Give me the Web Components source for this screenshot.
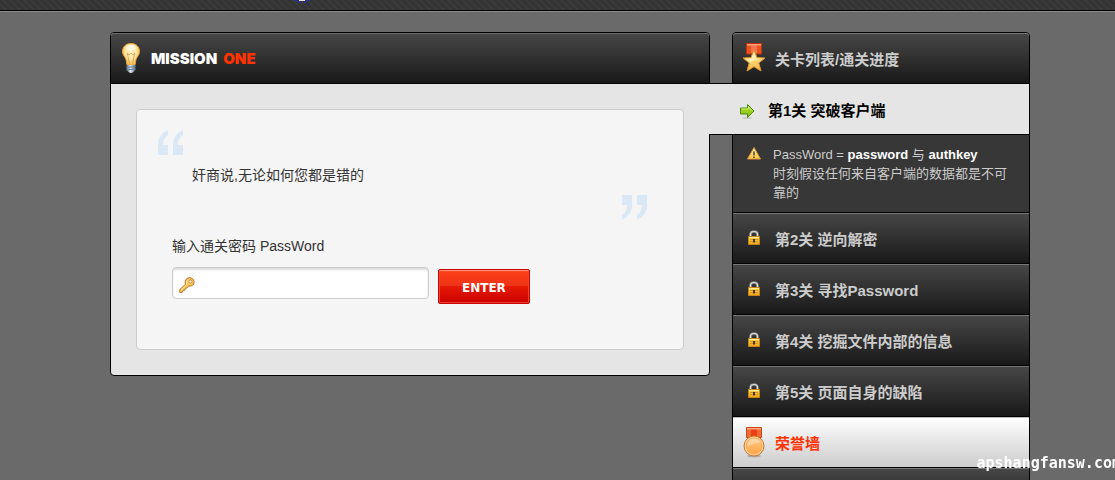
<!DOCTYPE html>
<html lang="zh-CN">
<head>
<meta charset="utf-8">
<title>Mission One</title>
<style>
  html, body { margin: 0; height: 100%; overflow: hidden; }
  body {
    background: #6a6a6a;
    color: #333;
    font: 14px/20px "Liberation Sans", "Noto Sans CJK SC", sans-serif;
  }
</style>
</head>
<body>
<mission-app></mission-app>
<script>
function define(name, html, setup) {
  const tpl = document.createElement('template');
  tpl.innerHTML = html;
  customElements.define(name, class extends HTMLElement {
    connectedCallback() {
      if (this.shadowRoot) return;
      this.attachShadow({ mode: 'open' }).append(tpl.content.cloneNode(true));
      if (setup) setup(this, this.shadowRoot);
    }
  });
}

const ICONS = {
  bulb: `<svg width="20" height="32" viewBox="0 0 20 32">
    <defs><radialGradient id="g" cx=".5" cy=".4" r=".6"><stop offset="0" stop-color="#fff6cc"/><stop offset=".55" stop-color="#fde29a"/><stop offset="1" stop-color="#f6b948"/></radialGradient>
    <linearGradient id="m"><stop offset="0" stop-color="#5f7387"/><stop offset=".45" stop-color="#dfe8f0"/><stop offset="1" stop-color="#54687c"/></linearGradient></defs>
    <path d="M10 1.500C4.800 1.500 1.500 5 1.500 9.500c0 3.500 2.500 5.200 3.500 8 .6 2 .4 4.500 1.200 5.500h7.600c.8-1 .6-3.500 1.200-5.500 1-2.800 3.500-4.500 3.500-8 0-4.500-3.300-8-8.500-8z" fill="url(#g)" stroke="#e8a33c"/>
    <path d="M8.500 21.500 6.300 11l1.700 2 2-2 2 2 1.700-2-2.200 10.500" fill="none" stroke="#c79a52" stroke-width=".8"/>
    <ellipse cx="10" cy="5.500" rx="5.500" ry="3" fill="#fff" opacity=".6"/>
    <path d="M5.500 23h9v4.500L12.500 30q-2.500 2-5 0l-2-2.500z" fill="url(#m)"/>
    <path d="M5.500 25.500 14.500 24.500M5.500 28l9-1.200" stroke="#647b93"/></svg>`,
  star: `<svg width="24" height="32" viewBox="0 0 24 32">
    <defs><linearGradient id="g" x2="0" y2="1"><stop offset="0" stop-color="#fff3a8"/><stop offset="1" stop-color="#fbb740"/></linearGradient></defs>
    <path d="M4.500 1.500h15V12h-15z" fill="#e8521f" stroke="#bf3410"/>
    <path d="M9 2h6v9H9z" fill="#f4744c"/><path d="M5 2h14v1.500H5z" fill="#ff9c75"/>
    <path d="m12 8 3 7.500 8 .5-6.200 5 2.200 8-7-4.300L5 29l2.200-8L1 16l8-.5z" fill="url(#g)" stroke="#dd9230" stroke-linejoin="round"/>
    <path d="m12 10.500 2 6 6.500.500q-9-.5-12.500 5l.500-1.500-5-3.500 6-.5z" fill="#fffbd8" opacity=".6"/></svg>`,
  medal: `<svg width="24" height="32" viewBox="0 0 24 32">
    <defs><linearGradient id="g" x2="0" y2="1"><stop offset="0" stop-color="#ffcb86"/><stop offset="1" stop-color="#ffa347"/></linearGradient></defs>
    <path d="M4.500 1.500h15v10h-15z" fill="#f06a35" stroke="#c74b18"/>
    <path d="M9 2h6v9H9z" fill="#ea3f14"/><path d="M5 2h14v1.500H5z" fill="#ffa37c"/>
    <ellipse cx="12" cy="30" rx="7" ry="1.500" fill="#555" opacity=".35"/>
    <circle cx="12" cy="20" r="10" fill="#ffd09a" stroke="#c97a2e"/>
    <circle cx="12" cy="20" r="8" fill="url(#g)" stroke="#f5ae60"/>
    <path d="M4.500 21Q6 12.500 12 12.500q5 0 7 4-8 .500-14.500 4.500z" fill="#fff" opacity=".28"/></svg>`,
  arrow: `<svg width="16" height="16" viewBox="0 0 16 16">
    <defs><linearGradient id="g" x2="0" y2="1"><stop offset="0" stop-color="#b6e03a"/><stop offset="1" stop-color="#7cc00c"/></linearGradient></defs>
    <ellipse cx="8" cy="15" rx="5" ry="1" fill="#888" opacity=".3"/>
    <path d="M1.500 5h7V1.500L15 8l-6.500 6.500V11h-7z" fill="url(#g)" stroke="#4d8a10" stroke-linejoin="round"/>
    <path d="M2.500 6h7V4L13 7.500" fill="none" stroke="#d8f07a" stroke-width=".8"/></svg>`,
  warning: `<svg width="16" height="16" viewBox="0 0 16 16">
    <defs><linearGradient id="g" x2="0" y2="1"><stop offset="0" stop-color="#fff2a0"/><stop offset="1" stop-color="#fdc63c"/></linearGradient></defs>
    <path d="M8 2.500 14.500 14h-13z" fill="url(#g)" stroke="#e09040" stroke-linejoin="round"/>
    <path d="M8 6.500v4M8 11.500v1.500" stroke="#444" stroke-width="1.500"/></svg>`,
  lock: `<svg width="16" height="16" viewBox="0 0 16 16">
    <defs><linearGradient id="g" x2="0" y2="1"><stop offset="0" stop-color="#ffd84f"/><stop offset="1" stop-color="#eda51c"/></linearGradient></defs>
    <path d="M4.500 8V4.500Q4.500 1.500 8 1.500t3.500 3V8" fill="none" stroke="#858585" stroke-width="2.600"/>
    <path d="M4.500 8V4.500Q4.500 1.500 8 1.500t3.500 3V8" fill="none" stroke="#ddd" stroke-width="1.200"/>
    <path d="M2.500 6.500h11v8h-11z" fill="url(#g)" stroke="#c98412"/>
    <path d="M3 7.500h10" stroke="#fff0a0"/><path d="M4 9.500h8M4 11.500h8" stroke="#d9941f"/>
    <path d="M7 9h2v3.500H7z" fill="#4c3512"/></svg>`,
  key: `<svg width="16" height="16" viewBox="0 0 16 16">
    <path d="M.8 12.500 6.300 7.500Q5.500 3.500 7.800 1.500q3-2 6 .3 2.500 2.700.7 5.700-2 2.300-5 1.500L8 11l-1.700.300-.5 2-1.800.2-.7 1.800-2.500.2z" fill="#fbc75c" stroke="#b8742c" stroke-linejoin="round"/>
    <path d="M2 13 7.500 8Q6.800 4 9 2.500" fill="none" stroke="#ffe391"/>
    <circle cx="11.500" cy="4.500" r="1.500" fill="#fff" stroke="#c78a40"/></svg>`,
  'quote-open': `<svg width="28" height="25" viewBox="0 0 28 25"><path d="M11 0Q1 5 1 14V25H11V15H6Q6 8 11 5ZM26 0Q16 5 16 14V25H26V15H21Q21 8 26 5Z" fill="#d9e8f4"/></svg>`,
  'quote-close': `<svg width="28" height="25" viewBox="0 0 28 25"><path d="M2 25Q12 20 12 11V0H2V10H7Q7 17 2 20ZM17 25Q27 20 27 11V0H17V10H22Q22 17 17 20Z" fill="#d9e8f4"/></svg>`
};

define('ui-icon', `<style>:host{display:block;flex:none} svg{display:block}</style><span></span>`,
  (el, root) => { root.querySelector('span').innerHTML = ICONS[el.getAttribute('name')]; });

define('top-bar', `
<style>
  :host { display: block; border-bottom: 1px solid #000; box-shadow: 0 1px #8a8a8a;
    background: repeating-linear-gradient(45deg, #343434 0 3px, #3a3a3a 3px 5px); }
  header { height: 10px; padding-left: 293px; }
  svg { display: block; }
</style>
<header><svg width="18" height="3" viewBox="0 0 18 3"><path d="M1 0h3v1h-3zM4 1h3v1H4zM11 1h3v1h-3zM14 0h3v1h-3zM5 2h3v1H5zM11 2h2v1h-2z" fill="#2c2c9c"/><path d="M6 0h6v1H6z" fill="#ddd"/></svg></header>`);

define('mission-panel', `
<style>
  :host { display: block; border: 1px solid #000; border-radius: 4px; background: #e5e5e5; }
  header { display: flex; align-items: center; gap: 10px; height: 50px; padding-left: 10px;
    border-bottom: 1px solid #000; border-radius: 3px 3px 0 0; box-shadow: inset 0 1px #6c6c6c;
    background: linear-gradient(#474747, #191919); }
  h1 { display: flex; gap: 6px; margin: 0; padding-top: 2px; font: 900 15px/20px Inter, sans-serif; color: #fff; }
  em { font-style: normal; color: #f30; }
  .body { padding: 25px; }
</style>
<header><ui-icon name="bulb"></ui-icon><h1>MISSION <em>ONE</em></h1></header>
<div class="body"><slot></slot></div>`);

define('quote-box', `
<style>
  :host { display: flex; flex-direction: column; gap: 10px; }
  .close { align-self: flex-end; margin-right: 15px; }
  blockquote { margin: 0 35px; }
</style>
<ui-icon name="quote-open"></ui-icon>
<blockquote><slot></slot></blockquote>
<ui-icon class="close" name="quote-close"></ui-icon>`);

define('password-form', `
<style>
  :host { display: block; margin: 16px 15px 25px; }
  label { display: block; margin-bottom: 11px; }
  .row { display: flex; align-items: flex-end; gap: 9px; }
  .field { display: grid; flex: 0 1 257px; align-self: flex-start; }
  .field > * { grid-area: 1 / 1; }
  ui-icon { align-self: center; margin: 4px 0 0 7px; z-index: 1; pointer-events: none; }
  input { box-sizing: border-box; width: 100%; height: 32px; padding: 0 8px 0 30px;
    border: 1px solid #ccc; border-radius: 4px; background: #fff; box-shadow: inset 0 2px 2px #ddd;
    font: inherit; color: #333; outline: 0; }
  button { margin: 2px 0 0; height: 35px; padding: 2px 23px 0; border: 1px solid #c00; border-radius: 2px;
    background: linear-gradient(#fd4119, #ee3318 50%, #e61a04 50%, #cb0000);
    box-shadow: inset 0 1px 1px #ff9a80, inset 0 0 0 1px #e8402c; color: #fff;
    font: bold 12px/20px "DejaVu Sans", sans-serif; }
</style>
<form>
  <label for="pw">输入通关密码 PassWord</label>
  <div class="row">
    <div class="field"><input id="pw" type="text"><ui-icon name="key"></ui-icon></div>
    <button type="button">ENTER</button>
  </div>
</form>`);

define('stage-list', `
<style>
  :host { display: block; border: 1px solid #000; border-radius: 4px 4px 0 0; }
  nav { display: block; }
</style>
<nav><slot></slot></nav>`);

define('stage-item', `
<style>
  :host { display: block; border-bottom: 1px solid #000; color: #ccc; font: bold 15px/20px "Liberation Sans", "Noto Sans CJK SC", sans-serif;
    background: linear-gradient(#474747, #191919); box-shadow: inset 0 1px #777; }
  .row { display: flex; align-items: center; height: 50px; color: inherit; text-decoration: none; font: inherit; margin: 0; }
  .icon { display: flex; justify-content: center; flex: none; width: 42px; }
  .text { padding-top: 3px; }
  :host([kind=title]) { border-radius: 3px 3px 0 0; }
  :host([kind=honor]) { color: #f30; background: linear-gradient(#fff, #ccc); box-shadow: inset 0 1px #bbb; }
  :host([kind=active]) { position: relative; margin: -1px 0 0 -24px; border-top: 1px solid #000; color: #000; background: #e5e5e5; box-shadow: none; }
  :host([kind=active]) .row { padding-left: 17px; }
  :host([kind=active]) ui-icon { padding-top: 3px; }
</style>
<div id="mount"></div>`,
  (el, root) => {
    const row = document.createElement(el.getAttribute('kind') === 'title' ? 'h2' : 'a');
    if (row.tagName === 'A') row.href = '#';
    row.className = 'row';
    row.innerHTML = (el.hasAttribute('icon') ? `<span class="icon"><ui-icon name="${el.getAttribute('icon')}"></ui-icon></span>` : '') + '<span class="text"><slot></slot></span>';
    root.querySelector('#mount').replaceWith(row);
  });

define('stage-hint', `
<style>
  :host { display: flex; gap: 11px; padding: 10px 20px 10px 13px; border-bottom: 1px solid #000;
    background: #373737; color: #ccc; font-size: 13px; line-height: 19px; }
  p { margin: 0; }
  ::slotted(b) { color: #fff; }
</style>
<ui-icon name="warning"></ui-icon><p><slot></slot></p>`);

define('site-mark', `
<style>
  :host { position: fixed; right: -6px; bottom: 7px; color: #fff; font: bold 15px/20px "DejaVu Sans Mono", monospace; white-space: nowrap; }
</style><slot></slot>`);

define('mission-app', `
<style>
  :host { display: block; }
  main { display: flex; align-items: flex-start; gap: 22px; padding: 21px 85px 0 110px; }
  mission-panel { flex: 1; min-width: 0; }
  stage-list { flex: 0 0 296px; }
  .card { border: 1px solid #ccc; border-radius: 4px; background: #f5f5f5; padding: 20px; }
</style>
<top-bar></top-bar>
<main>
  <mission-panel>
    <div class="card">
      <quote-box>奸商说,无论如何您都是错的</quote-box>
      <password-form></password-form>
    </div>
  </mission-panel>
  <stage-list>
    <stage-item kind="title" icon="star">关卡列表/通关进度</stage-item>
    <stage-item kind="active" icon="arrow">第1关 突破客户端</stage-item>
    <stage-hint>PassWord = <b>password</b> 与 <b>authkey</b><br>时刻假设任何来自客户端的数据都是不可靠的</stage-hint>
    <stage-item icon="lock">第2关 逆向解密</stage-item>
    <stage-item icon="lock">第3关 寻找Password</stage-item>
    <stage-item icon="lock">第4关 挖掘文件内部的信息</stage-item>
    <stage-item icon="lock">第5关 页面自身的缺陷</stage-item>
    <stage-item kind="honor" icon="medal">荣誉墙</stage-item>
    <stage-item></stage-item>
  </stage-list>
</main>
<site-mark>apshangfansw.com</site-mark>`);
</script>
</body>
</html>
